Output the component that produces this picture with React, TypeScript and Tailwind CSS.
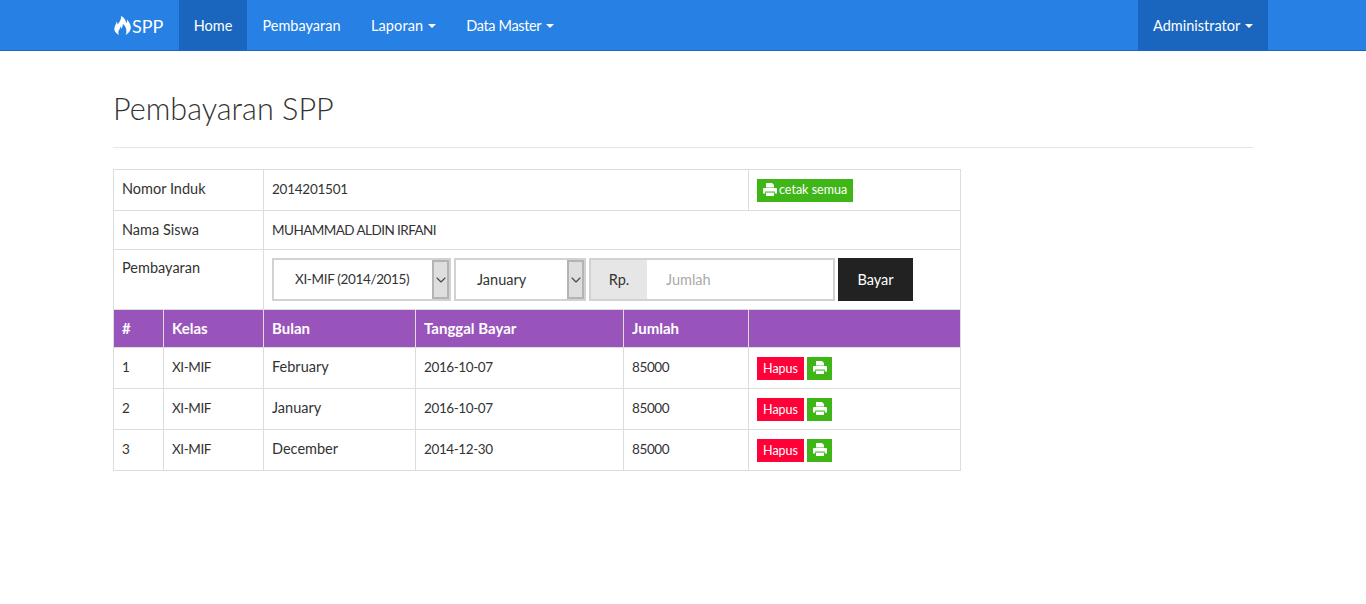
import { ImFire } from "react-icons/im";
import { LuChevronDown } from "react-icons/lu";

const rows = [
  { no: 1, kelas: "XI-MIF", bulan: "February", tanggal: "2016-10-07", jumlah: "85000" },
  { no: 2, kelas: "XI-MIF", bulan: "January", tanggal: "2016-10-07", jumlah: "85000" },
  { no: 3, kelas: "XI-MIF", bulan: "December", tanggal: "2014-12-30", jumlah: "85000" },
];

const cell = "border border-[#ddd] px-2 pb-[2px] align-middle";
const plainCell = "border border-[#ddd] px-2 align-middle";
// digits and capitals run narrower in the reference
const narrow = "text-[13.5px] tracking-[-0.4px]";

function Caret() {
  return <span className="ml-[5px] inline-block border-x-4 border-t-4 border-x-transparent border-t-white align-middle" />;
}

function PrintIcon() {
  return (
    <svg viewBox="0 0 14 13" className="mb-[1px] h-[13px] w-[14px]" fill="currentColor">
      <path d="M3 0h6l2 2v2.6H3z" />
      <path d="M1 5h12a1 1 0 0 1 1 1v4.5h-2.2V8.6H2.2v1.9H0V6a1 1 0 0 1 1-1z" />
      <path d="M3 9.6h8V13H3z" />
    </svg>
  );
}

function NavLink({ label, active, caret, cls = "" }: { label: string; active?: boolean; caret?: boolean; cls?: string }) {
  return (
    <a href="#" className={`flex h-[50px] items-center px-[15px] pt-[1px] text-white ${active ? "bg-[#1a66be]" : ""} ${cls}`}>
      {label}
      {caret && <Caret />}
    </a>
  );
}

function FakeSelect({ value, width, cls }: { value: string; width: string; cls: string }) {
  return (
    <div className={`flex h-[43px] ${width} items-stretch border-2 border-[#d2d2d2] bg-white`}>
      <span className={`flex flex-1 items-center pl-[21px] ${cls}`}>{value}</span>
      <span className="flex w-[17px] items-center justify-center border-2 border-[#b4b4b4] bg-[#dedede] text-[#444]">
        <LuChevronDown className="h-4 w-4 shrink-0" strokeWidth={1.6} />
      </span>
    </div>
  );
}

export default function App() {
  return (
    <div className="min-h-[604px] bg-white text-[14.5px] text-[#333]" style={{ fontFamily: '"Lato", "Liberation Sans", sans-serif' }}>
      <nav className="h-[51px] border-b border-[#1a66be] bg-[#2780e3]">
        <div className="mx-auto flex w-[1170px] justify-between">
          <div className="flex">
            <a href="#" className="flex h-[50px] w-[81px] items-center pl-[15px] text-white">
              <ImFire className="h-[21px] w-[19px]" />
              <span className="pt-[3px] text-[18px]">SPP</span>
            </a>
            <NavLink label="Home" active cls="w-[68px] justify-center" />
            <NavLink label="Pembayaran" cls="w-[109px] justify-center" />
            <NavLink label="Laporan" caret cls="tracking-[0.1px]" />
            <NavLink label="Data Master" caret cls="tracking-[-0.35px]" />
          </div>
          <div className="flex bg-[#1a66be]">
            <NavLink label="Administrator" caret cls="w-[130px]" />
          </div>
        </div>
      </nav>

      <main className="mx-auto w-[1140px]">
        <div className="mt-[40px] border-b border-[#e6e6e6] pb-[20px]">
          <h1 className="pb-[1px] text-[30.6px] leading-[35px] font-light">Pembayaran SPP</h1>
        </div>

        <table className="mt-[21px] w-[847px] table-fixed border-collapse">
          <colgroup>
            <col className="w-[50px]" />
            <col className="w-[100px]" />
            <col className="w-[152px]" />
            <col className="w-[208px]" />
            <col className="w-[125px]" />
            <col className="w-[212px]" />
          </colgroup>
          <tbody>
            <tr className="h-[41px]">
              <td colSpan={2} className={cell}>Nomor Induk</td>
              <td colSpan={3} className={cell}><span className="text-[13.5px] tracking-[-0.25px]">2014201501</span></td>
              <td className={cell}>
                <button className="mt-[2px] flex h-[23px] items-center gap-[2px] bg-[#3fb618] px-[6px] text-[12.5px] text-white">
                  <PrintIcon />
                  <span className="pt-[1px]">cetak semua</span>
                </button>
              </td>
            </tr>
            <tr className="h-[39px]">
              <td colSpan={2} className={plainCell}>Nama Siswa</td>
              <td colSpan={4} className={plainCell}><span className="text-[13.5px] tracking-[-0.55px]">MUHAMMAD ALDIN IRFANI</span></td>
            </tr>
            <tr className="h-[60px]">
              <td colSpan={2} className={`${cell} !align-top pt-[7px]`}>Pembayaran</td>
              <td colSpan={4} className={plainCell}>
                <div className="flex items-center">
                  <FakeSelect value="XI-MIF (2014/2015)" width="w-[179px]" cls="text-[13.5px] tracking-[-0.35px]" />
                  <div className="ml-[3px]">
                    <FakeSelect value="January" width="w-[132px]" cls="" />
                  </div>
                  <div className="ml-[3px] flex h-[43px] w-[246px] border-2 border-[#d2d2d2]">
                    <span className="flex w-[56px] items-center justify-center bg-[#e6e6e6]">Rp.</span>
                    <input placeholder="Jumlah" className="min-w-0 flex-1 bg-white pl-[19px] placeholder:text-[#aaa] outline-none" />
                  </div>
                  <button className="ml-[3px] h-[43px] w-[75px] bg-[#222] text-white">Bayar</button>
                </div>
              </td>
            </tr>
            <tr className="h-[38px] bg-[#9954bb] text-[15px] font-bold text-white">
              <td className={plainCell}>#</td>
              <td className={plainCell}>Kelas</td>
              <td className={plainCell}>Bulan</td>
              <td className={plainCell}>Tanggal Bayar</td>
              <td className={plainCell}>Jumlah</td>
              <td className={plainCell}></td>
            </tr>
            {rows.map((r) => (
              <tr key={r.no} className="h-[41px]">
                <td className={cell}><span className={narrow}>{r.no}</span></td>
                <td className={cell}><span className={narrow}>{r.kelas}</span></td>
                <td className={cell}>{r.bulan}</td>
                <td className={cell}><span className={narrow}>{r.tanggal}</span></td>
                <td className={cell}><span className={narrow}>{r.jumlah}</span></td>
                <td className={cell}>
                  <div className="mt-[2px] flex gap-[3px]">
                    <button className="flex h-[23px] w-[47px] items-center justify-center bg-[#ff0039] pt-[2px] text-[12.5px] text-white">Hapus</button>
                    <button className="flex h-[23px] w-[25px] items-center justify-center bg-[#3fb618] text-white">
                      <PrintIcon />
                    </button>
                  </div>
                </td>
              </tr>
            ))}
          </tbody>
        </table>
      </main>
    </div>
  );
}
